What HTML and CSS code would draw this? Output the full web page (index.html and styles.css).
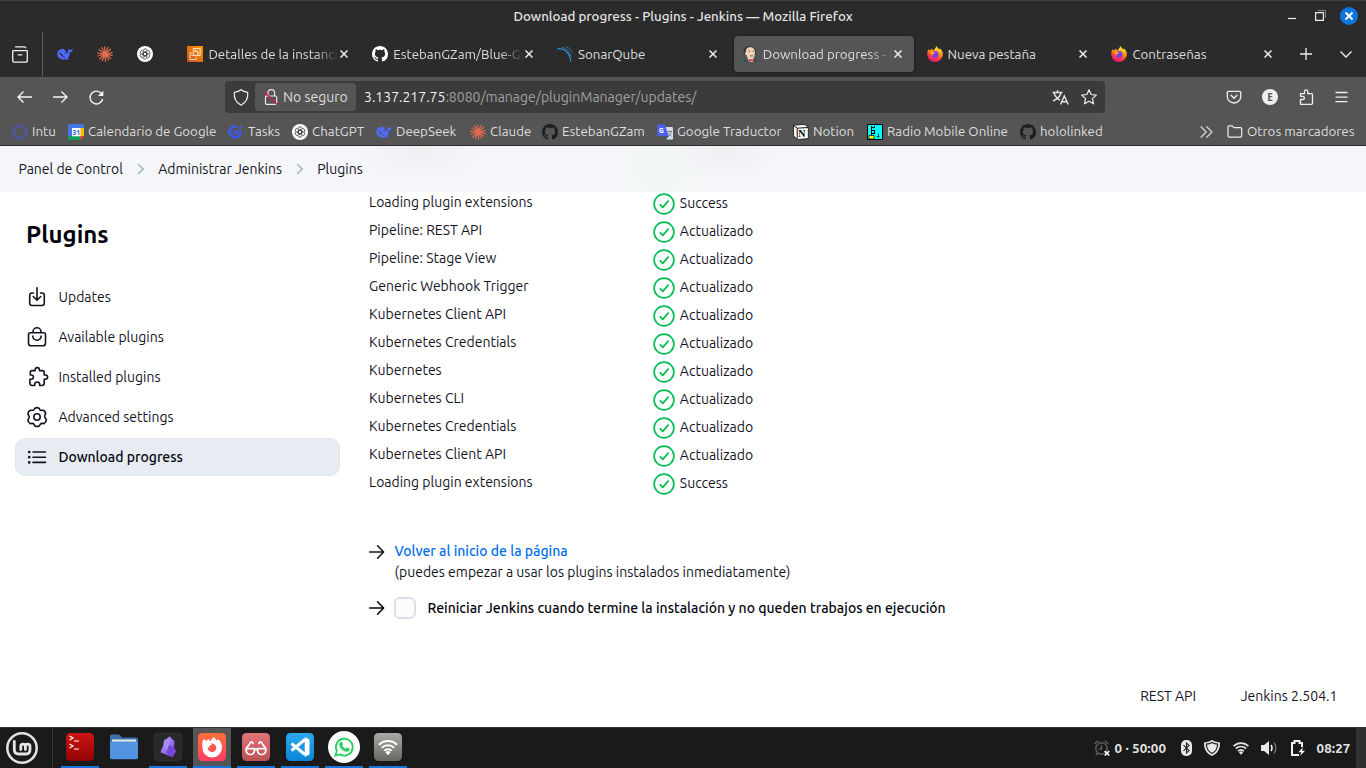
FILE: index.html
```html
<!DOCTYPE html>
<html lang="es">
<head>
<meta charset="utf-8">
<title>Download progress - Plugins - Jenkins</title>
<link rel="stylesheet" href="styles.css">
</head>
<body>
<svg class="defs" aria-hidden="true">
  <defs>
    <linearGradient id="orange" x1="0" y1="1" x2="1" y2="0"><stop offset="0" stop-color="#c8511b"/><stop offset="1" stop-color="#f90"/></linearGradient>
    <linearGradient id="fire" x1=".7" y1="0" x2=".3" y2="1"><stop offset="0" stop-color="#fff44f"/><stop offset=".4" stop-color="#ff980e"/><stop offset=".7" stop-color="#ff3647"/><stop offset="1" stop-color="#e31587"/></linearGradient>
    <linearGradient id="red" x1="0" y1="0" x2="0" y2="1"><stop offset="0" stop-color="#d01313"/><stop offset="1" stop-color="#900404"/></linearGradient>
    <linearGradient id="coral" x1="0" y1="0" x2="0" y2="1"><stop offset="0" stop-color="#ff7139"/><stop offset="1" stop-color="#ff3c65"/></linearGradient>
    <linearGradient id="rose" x1="0" y1="0" x2="0" y2="1"><stop offset="0" stop-color="#e27479"/><stop offset="1" stop-color="#bb5055"/></linearGradient>
    <linearGradient id="sky" x1="0" y1="0" x2="0" y2="1"><stop offset="0" stop-color="#2baaf0"/><stop offset="1" stop-color="#0b84d6"/></linearGradient>
    <linearGradient id="stone" x1="0" y1="0" x2="0" y2="1"><stop offset="0" stop-color="#aaaaa4"/><stop offset="1" stop-color="#666761"/></linearGradient>
    <linearGradient id="gem" x1="0" y1="0" x2="1" y2="1"><stop offset="0" stop-color="#c4a9ff"/><stop offset="1" stop-color="#6a35d0"/></linearGradient>
  </defs>
  <symbol id="whale" viewBox="0 0 16 16"><path fill="#4d6bfe" d="M.3 7.500C.5 4.600 2.800 3 5.200 3.100c.8 0 1.300-.6 2.100-.2-.4 1 1.700 1.800 2.700 4 .8.6 1.200-.2 1.100-1C10.900 5 11 3.700 12 2.500c.2 1.200.8 1.600 1.700 1.400.7-.1 1.400-.6 2-1-.1 2.100-1 3.300-2.800 3.600.1 2.700-.9 4.700-2.300 6 .6.3 1 .5 1.200 1-1.100.3-2.100.1-3-.3C4.300 14.500 0 11.600.3 7.500z"/><path fill="var(--back)" d="M1.800 6.500c1.700 0 3.100 1.500 4.200 3.100.8 1.300 1.700 1.400 2.700 2-1.500.2-2.900-.5-3.900-1.500C3.500 8.900 3 8.200 1.800 6.500zM7.500 6.500c1.200-.2 1.800.7 1.600 1.400L7.800 7.500z"/></symbol>
  <symbol id="burst" viewBox="0 0 16 16"><path stroke="#e06b50" stroke-width="1.250" stroke-linecap="round" d="M8 8 7.700.8M8 8 11 1.500M8 8l5.500-4.800M8 8l7-1.300M8 8l7.200 1.300M8 8l5.800 4.300M8 8l3.500 6M8 8l.5 7.300M8 8l-2.800 6.700M8 8l-5.300 5M8 8 .8 10M8 8 .8 7.200M8 8 2 3.800M8 8 4.700 1.500"/></symbol>
  <symbol id="gpt" viewBox="0 0 16 16">
    <circle cx="8" cy="8" r="8" fill="#fff"/>
    <g fill="none" stroke="#222" stroke-width=".75">
      <path d="M8 5.900 9.800 7v2L8 10.100 6.200 9V7z"/>
      <path d="M6.200 9V4.800Q6.500 3 8.200 2.900q1.300 0 2 1"/>
      <path d="M6.200 9V4.800Q6.500 3 8.200 2.900q1.300 0 2 1" transform="rotate(60 8 8)"/>
      <path d="M6.200 9V4.800Q6.500 3 8.200 2.900q1.300 0 2 1" transform="rotate(120 8 8)"/>
      <path d="M6.200 9V4.800Q6.500 3 8.200 2.900q1.300 0 2 1" transform="rotate(180 8 8)"/>
      <path d="M6.200 9V4.800Q6.500 3 8.200 2.900q1.300 0 2 1" transform="rotate(240 8 8)"/>
      <path d="M6.200 9V4.800Q6.500 3 8.200 2.900q1.300 0 2 1" transform="rotate(300 8 8)"/>
    </g>
  </symbol>
  <symbol id="github" viewBox="0 0 16 16"><path fill="currentColor" d="M8 0C3.580 0 0 3.580 0 8c0 3.540 2.290 6.530 5.470 7.590.4.070.55-.17.55-.38 0-.19-.01-.82-.01-1.490-2.010.37-2.530-.49-2.690-.94-.09-.23-.48-.94-.82-1.130-.28-.15-.68-.52-.01-.53.63-.01 1.080.58 1.230.82.72 1.210 1.870.87 2.330.66.07-.52.28-.87.51-1.070-1.780-.2-3.640-.89-3.640-3.950 0-.87.31-1.590.82-2.150-.08-.2-.36-1.020.08-2.120 0 0 .67-.21 2.200.82.64-.18 1.320-.27 2-.27s1.360.09 2 .27c1.530-1.040 2.200-.82 2.200-.82.44 1.100.16 1.920.08 2.120.51.56.82 1.270.82 2.150 0 3.070-1.870 3.750-3.650 3.950.29.25.54.73.54 1.480 0 1.070-.01 1.930-.01 2.200 0 .21.15.46.55.38A8.010 8.010 0 0 0 16 8c0-4.420-3.580-8-8-8z"/></symbol>
  <symbol id="firefox" viewBox="0 0 16 16"><path fill="url(#fire)" d="M1.400 3.300 3 4.600c.5-1 1.300-1.700 2-2 0 .9.500 1.500 1.200 1.900C7.500 3.900 8 2.200 10 0c.2 1.800 1.200 2.500 2.300 3.200l.4-.8c2 1.300 3.200 3.200 3.100 5.900A7.800 7.800 0 0 1 8 16 7.800 7.800 0 0 1 .2 8.100c0-1.800.3-3.300 1.200-4.800z"/><circle cx="8" cy="8.400" r="3.400" fill="#7542e5"/><path fill="#ff9f1c" d="M3.200 6c1.600-.8 3.200-.4 4.600.4.400.9-.7 1.200-1.500 1.500-.6.300-.2 1.300-.1 1.700-1.800-.1-3-1.800-3-3.600z"/></symbol>
  <symbol id="check" viewBox="0 0 22 22"><g fill="none" stroke="#05bd55" stroke-width="1.700" stroke-linecap="round" stroke-linejoin="round"><circle cx="11" cy="11" r="9.900"/><path d="m7.300 11.800 2.500 2.600 5.300-6.300"/></g></symbol>
  <symbol id="arrow" viewBox="0 0 16 16"><path fill="none" stroke="currentColor" stroke-width="1.600" stroke-linecap="round" stroke-linejoin="round" d="M.8 8h13.600M8.600 1.800 14.600 8l-6 6.200"/></symbol>
  <symbol id="close" viewBox="0 0 8 8"><path stroke="currentColor" stroke-width="1.500" d="m.5.5 7 7m0-7-7 7"/></symbol>
  <symbol id="wifi" viewBox="0 0 16 14"><g fill="none" stroke="currentColor" stroke-width="1.700"><path d="M.6 5.200a10.400 10.400 0 0 1 14.800 0M2.800 7.700a7.300 7.300 0 0 1 10.400 0M5 10.100a4.200 4.200 0 0 1 6 0"/></g><path fill="currentColor" d="M5.900 11.400a3 3 0 0 1 4.200 0L8 13.800z"/></symbol>
</svg>

<header class="browser">
  <div class="titlebar">
    <span class="window-title">Download progress - Plugins - Jenkins — Mozilla Firefox</span>
    <div class="window-buttons">
      <svg width="8" height="12"><path stroke="#eee" stroke-width="1.200" d="M0 8.500h8"/></svg>
      <svg width="11" height="11" fill="none"><path stroke="#eee" stroke-width="1.200" d="M.6 2.600h7.800v7.800H.6z"/><path stroke="#888" d="M3 .5h7.500V8"/></svg>
      <span class="window-close"><svg width="8" height="8" viewBox="0 0 8 8"><path stroke="#fff" stroke-width="2" d="m.5.5 7 7m0-7-7 7"/></svg></span>
    </div>
  </div>

  <div class="tabstrip">
    <div class="archive"><svg width="16" height="17" fill="none" stroke="#f0f0f0" stroke-width="1.300" stroke-linecap="round"><path d="M3.500.8h9.200q1 0 1 1M1 4.600h14a.8.8 0 0 1 .3.800v8.800q0 2-2 2H2.700q-2 0-2-2V5.400q0-.8.800-.8zM6.200 8.800h3.600"/></svg></div>
    <div class="pinned">
      <svg class="fav"><use href="#whale"/></svg>
      <svg class="fav"><use href="#burst"/></svg>
      <svg class="fav"><use href="#gpt"/></svg>
    </div>
    <div class="tabs">
      <div class="tab"><svg class="fav" viewBox="0 0 16 16" fill="none" stroke="#fff" stroke-width=".9"><path fill="url(#orange)" stroke="none" d="M0 0h16v16H0z"/><rect x="6.300" y="5.200" width="4.500" height="4.500" rx=".5"/><path d="M5.200 7H3v6.500h6.300v-2.200M6.200 5V2.500h7v7h-2.300M8.500 3.300v1.500M12 7.400h1M4.300 9.500h1.500" stroke-width=".75"/></svg><span class="tab-title fade">Detalles de la instancia</span><svg class="x"><use href="#close"/></svg></div>
      <div class="tab"><svg class="fav white"><use href="#github"/></svg><span class="tab-title fade">EstebanGZam/Blue-Green</span><svg class="x"><use href="#close"/></svg></div>
      <div class="tab"><svg class="fav" viewBox="0 0 16 16" fill="none" stroke="#2f8fc7" stroke-linecap="round"><path d="M.5 2.800C8 2 13.200 8 13.700 15.500" stroke-width="1.200"/><path d="M5.500 1.200c4.300 1.300 7.600 5 8.700 9M9.500.7c2.400 1 4.300 2.900 5.500 5" stroke-width=".8"/></svg><span class="tab-title">SonarQube</span><svg class="x"><use href="#close"/></svg></div>
      <div class="tab active"><svg class="fav" viewBox="0 0 16 16"><path fill="#335061" d="M.8 16q0-3.300 3.700-4h7q3.200 1 3.300 4z"/><path fill="#3d3835" d="M1.500 6.500Q1 .3 8 .1q6.300.2 6.200 6.400L13 10.500 4 10.200z"/><path fill="#f0d6b7" d="M4 6C3.800 2.300 5.500 1.200 8.300 1.200S13 2.800 12.900 6.500c0 4-1.300 7-4 7C6 13.500 4.800 11 4.600 9 3 9.200 2.600 6.500 4 6z"/><path stroke="#5d4c3c" stroke-width=".9" fill="none" d="M6.300 5.200h2m2.200 0H12M8 9.900h3"/><path fill="#6e6259" d="m3.500 9 3.500 5-3-.2z"/><path fill="#fff" d="m6 12 3 2.500 2.700-2-.4 3.500H7z"/><path fill="#d33833" d="m7 13 2.500 1L12 13v3l-2.500-.8L7 16z"/></svg><span class="tab-title fade">Download progress - Plugins</span><svg class="x"><use href="#close"/></svg></div>
      <div class="tab"><svg class="fav"><use href="#firefox"/></svg><span class="tab-title">Nueva pestaña</span><svg class="x"><use href="#close"/></svg></div>
      <div class="tab"><svg class="fav"><use href="#firefox"/></svg><span class="tab-title">Contraseñas</span><svg class="x"><use href="#close"/></svg></div>
    </div>
    <svg class="newtab" width="12" height="12"><path stroke="#f0f0f0" stroke-width="1.300" d="M6 0v12M0 6h12"/></svg>
    <svg class="alltabs" width="12" height="7"><path fill="none" stroke="#f0f0f0" stroke-width="1.300" d="m.5.5 5.500 5.500L11.500.5"/></svg>
  </div>

  <div class="navbar">
    <div class="history">
      <svg width="15" height="12" fill="none" stroke="#f5f5f5" stroke-width="1.400"><path d="M15 6H1.300M6.500.5 1 6l5.500 5.500"/></svg>
      <svg width="15" height="12" fill="none" stroke="#f5f5f5" stroke-width="1.400"><path d="M0 6h13.700M8.500.5 14 6l-5.500 5.500"/></svg>
      <svg width="15" height="15" fill="none" stroke="#f5f5f5" stroke-width="1.400"><path d="M12.800 4A6.400 6.400 0 1 0 13.700 9"/><path fill="#f5f5f5" stroke="none" d="M14.300.7v5.400H8.900z"/></svg>
    </div>
    <div class="urlbar">
      <svg class="shield" width="16" height="17" fill="none" stroke="#eee" stroke-width="1.200"><path d="M8 .8Q10.500 3 14.700 3.300C15.200 9 12.500 14 8 16.200 3.500 14 .8 9 1.300 3.300 5.500 3 8 .8 8 .8z"/></svg>
      <span class="identity"><svg width="14" height="16" fill="none"><path stroke="#e8e8e8" stroke-width="1.200" d="M4 7V4a3.300 3.300 0 0 1 6.600 0v3M2.800 7h8.700q1.200 0 1.200 1.200V14q0 1.300-1.300 1.300H2.800q-1.300 0-1.300-1.300V8.200Q1.500 7 2.800 7z"/><path stroke="#e0174b" stroke-width="1.300" d="m.2 2.500 13 13"/></svg><span class="identity-label">No seguro</span></span>
      <span class="url"><span class="host">3.137.217.75</span>:8080/manage/pluginManager/updates/</span>
      <svg class="translate" width="17" height="15" fill="none" stroke="#e5e5e5" stroke-width="1.400"><path d="M.5 2.500h10M5.500.2v2.200M2 3c1.200 3.600 3.300 5.800 6 7.200M9 3C8 6.500 5 9.300 1 11M8.500 14.500 12.300 6l3.900 8.500M9.500 11.800h5.500"/></svg>
      <svg class="star" width="16" height="16" viewBox="0 0 16 16" fill="none" stroke="#eee" stroke-width="1.200" stroke-linejoin="round"><path d="m8 .8 2.100 4.700 5.200.6-3.900 3.500 1.100 5.200L8 12.200l-4.500 2.600 1.100-5.200L.7 6.100l5.200-.6z"/></svg>
    </div>
    <div class="tools">
      <svg width="16" height="16" viewBox="0 0 16 16" fill="none" stroke="#eee" stroke-width="1.300" stroke-linecap="round" stroke-linejoin="round"><path d="M2.500 2.300h11q1.200 0 1.200 1.200v4A6.700 6.200 0 0 1 8 14 6.700 6.200 0 0 1 1.300 7.500v-4q0-1.200 1.200-1.200z"/><path d="m5 6.200 3 3 3-3"/></svg>
      <span class="account">E</span>
      <svg width="15" height="16" fill="none" stroke="#eee" stroke-width="1.300" stroke-linejoin="round"><path d="M1.500 15.300V10.500h2.300c2.100 0 2.100-3.200 0-3.200H1.500V4.700h4V2.500c0-2.300 3.300-2.300 3.300 0v2.200h3.700q1 0 1 1v8.600q0 1-1 1z"/></svg>
      <svg width="13" height="12"><path stroke="#eee" stroke-width="1.300" d="M.5 1.500h12m-12 4.600h12m-12 4.500h12"/></svg>
    </div>
  </div>

  <div class="bookmarks">
    <span class="bm"><svg class="fav" viewBox="0 0 16 16" fill="none" stroke="#5558d8"><circle cx="8" cy="8" r="6.300" stroke-width="3" stroke-dasharray=".8 .85"/></svg>Intu</span>
    <span class="bm"><svg class="fav" viewBox="0 0 16 16"><path fill="#4374e8" d="M1 0h14l1 1v11H0V1z"/><path fill="#fbbc04" d="M12 4h4v8h-4z"/><path fill="#0f9d58" d="M0 12h12v4H1l-1-1z"/><path fill="#ea4335" d="M12 12h4l-4 4z"/><path fill="#fff" d="M4 4h8.500v8.300H4z"/><text x="4.200" y="11" class="cal">31</text></svg>Calendario de Google</span>
    <span class="bm"><svg class="fav" viewBox="0 0 16 16" fill="none"><path stroke="#3c59f5" stroke-width="2.600" d="M8 2.400A5.500 5.500 0 1 0 12.500 7"/><path stroke="#3c59f5" stroke-width="1.900" d="m4.700 7 2.500 2.300 3.600-3.800"/><circle cx="12.300" cy="3.200" r="1.500" fill="#3c59f5"/></svg>Tasks</span>
    <span class="bm"><svg class="fav"><use href="#gpt"/></svg>ChatGPT</span>
    <span class="bm"><svg class="fav"><use href="#whale"/></svg>DeepSeek</span>
    <span class="bm"><svg class="fav"><use href="#burst"/></svg>Claude</span>
    <span class="bm"><svg class="fav black"><use href="#github"/></svg>EstebanGZam</span>
    <span class="bm"><svg class="fav" viewBox="0 0 16 16"><path fill="#d8dde3" d="M7 3h8q1 0 1 1v10.500q0 1-1 1H9.500z"/><path fill="#4c62ee" d="M1.200.5h6.600l4 11.500H1.200q-1 0-1-1V1.500q0-1 1-1z"/><path fill="#3548b8" d="M8.500 12h3.300l-2.300 3z"/><path fill="none" stroke="#667b86" stroke-width=".9" d="M10.500 7.500h4.600m-2.300-1v1m1.700 0q-.7 3-3.500 4.800m.3-3q1.500 2 3.300 3"/><text x="1.800" y="9" class="gt">G</text></svg>Google Traductor</span>
    <span class="bm"><svg class="fav" viewBox="0 0 16 16"><path fill="#fff" stroke="#111" stroke-width=".8" d="m.6 1.200 11-.8 3.700 2.500v11.700l-11 .9-3.700-3.800z"/><path fill="none" stroke="#111" d="m1 1.800 3.200 2.400V15M4.200 4.200 15.300 3.500"/><text x="5.300" y="13.200" class="notion">N</text></svg>Notion</span>
    <span class="bm"><svg class="fav" viewBox="0 0 16 16"><path fill="#0ff" stroke="#000" d="M.5.500h15v15H.5z"/><path fill="none" stroke="#000" d="M4.500 2v9.500M7.500 2v2M7.500 6v4M4.500 3.500h3M4.500 6.500h3M4.500 9.500h3"/><path fill="none" stroke="#063" d="M11.500 9.500V14M9.500 12.500h3"/><path fill="#ff0" stroke="#000" stroke-width=".7" d="M2 11.500h5v3.500H2z"/></svg>Radio Mobile Online</span>
    <span class="bm"><svg class="fav black"><use href="#github"/></svg>hololinked</span>
    <svg class="more" width="13" height="12" fill="none" stroke="#ddd" stroke-width="1.200"><path d="M.7.500 6.200 6 .7 11.500m5.800-11L12 6l-5.500 5.500"/></svg>
    <span class="bm others"><svg width="16" height="13" fill="none" stroke="#eee" stroke-width="1.200"><path d="M1 2Q1 .8 2.200.8h3L7 2.600h6.500q1.200 0 1.200 1.200v7q0 1.300-1.200 1.300H2.200Q1 12.100 1 10.800z"/></svg>Otros marcadores</span>
  </div>
</header>

<main class="page">
  <nav class="breadcrumbs">
    <span>Panel de Control</span>
    <svg class="chev" width="8" height="12"><path d="m1.200 1.200 5 4.800-5 4.800"/></svg>
    <span>Administrar Jenkins</span>
    <svg class="chev" width="8" height="12"><path d="m1.200 1.200 5 4.800-5 4.800"/></svg>
    <span>Plugins</span>
  </nav>
  <div class="columns">
    <aside class="side">
      <h1>Plugins</h1>
      <a class="task"><svg width="22" height="22" viewBox="0 0 22 22"><path d="M7.500 7H6Q3.700 7 3.700 9.300v8q0 2.200 2.300 2.200h10q2.300 0 2.300-2.200v-8Q18.300 7 16 7h-1.500M11 1.800v12M7.300 10.500l3.700 3.700 3.700-3.700"/></svg>Updates</a>
      <a class="task"><svg width="22" height="22" viewBox="0 0 22 22"><path d="M4.500 6.800h13q2 0 2 2v8.400q0 2.600-2.600 2.600H5.100q-2.600 0-2.600-2.600V8.800q0-2 2-2zM7 6.500V5.800a4 4 0 0 1 8 0v.7M6.800 10a4.200 4.200 0 0 0 8.400 0"/></svg>Available plugins</a>
      <a class="task"><svg width="22" height="22" viewBox="0 0 22 22"><path d="M19.500 9h-1.300V6.400q0-1.800-1.800-1.800h-3V3.700a2 2 0 0 0-4.200 0v.9H6Q4.300 4.600 4.300 6.400V9h1a2.100 2.100 0 0 1 0 4.200h-1.400V17q0 2.500 2.500 2.500h2.300v-1a2.500 2.500 0 0 1 5 0v1h2q2.500 0 2.500-2.500v-3.800h1.300a2.100 2.100 0 0 0 0-4.200z"/></svg>Installed plugins</a>
      <a class="task"><svg width="22" height="22" viewBox="0 0 22 22"><circle cx="11" cy="11" r="3.200"/><path d="M8.800 2.400Q11 .8 13.200 2.400l.7 1.500q.7.700 1.800.4l1.600-.1q2.400 1.100 2.300 3.700l-.9 1.500q-.4 1.600.9 3.200l.8 1.200q-.1 2.600-2.300 3.800l-1.700-.2q-1.300-.1-2 .8l-.9 1.500q-2.400 1.500-4.800 0L8 18.200q-.8-1-2.100-.8l-1.700.2q-2.300-1.300-2.300-3.800l.9-1.500q.8-1.300 0-2.700l-.9-1.600Q1.900 5.400 4.300 4.200L6 4.300q1.300.1 2-.6z"/></svg>Advanced settings</a>
      <a class="task current"><svg width="22" height="22" viewBox="0 0 22 22"><path d="M7 6h12.500M7 11.200h12.500M7 16.400h12.500"/><path class="dots" d="M3.200 6h.01M3.200 11.200h.01M3.200 16.400h.01"/></svg>Download progress</a>
    </aside>
    <section class="content">
      <div class="row"><span>Loading plugin extensions</span><svg><use href="#check"/></svg><span class="status">Success</span></div>
      <div class="row"><span>Pipeline: REST API</span><svg><use href="#check"/></svg><span class="status">Actualizado</span></div>
      <div class="row"><span>Pipeline: Stage View</span><svg><use href="#check"/></svg><span class="status">Actualizado</span></div>
      <div class="row"><span>Generic Webhook Trigger</span><svg><use href="#check"/></svg><span class="status">Actualizado</span></div>
      <div class="row"><span>Kubernetes Client API</span><svg><use href="#check"/></svg><span class="status">Actualizado</span></div>
      <div class="row"><span>Kubernetes Credentials</span><svg><use href="#check"/></svg><span class="status">Actualizado</span></div>
      <div class="row"><span>Kubernetes</span><svg><use href="#check"/></svg><span class="status">Actualizado</span></div>
      <div class="row"><span>Kubernetes CLI</span><svg><use href="#check"/></svg><span class="status">Actualizado</span></div>
      <div class="row"><span>Kubernetes Credentials</span><svg><use href="#check"/></svg><span class="status">Actualizado</span></div>
      <div class="row"><span>Kubernetes Client API</span><svg><use href="#check"/></svg><span class="status">Actualizado</span></div>
      <div class="row"><span>Loading plugin extensions</span><svg><use href="#check"/></svg><span class="status">Success</span></div>
      <div class="next">
        <svg class="go"><use href="#arrow"/></svg>
        <div><a class="link">Volver al inicio de la página</a><p>(puedes empezar a usar los plugins instalados inmediatamente)</p></div>
      </div>
      <div class="restart">
        <svg class="go"><use href="#arrow"/></svg>
        <span class="checkbox"></span>
        <label>Reiniciar Jenkins cuando termine la instalación y no queden trabajos en ejecución</label>
      </div>
    </section>
  </div>
  <footer class="footer"><span>REST API</span><span>Jenkins 2.504.1</span></footer>
</main>

<div class="panel">
  <div class="menu"><svg width="32" height="32" viewBox="0 0 32 32" fill="none" stroke="#e4e4e4"><circle cx="16" cy="16" r="14.700" stroke-width="2.500"/><path stroke-width="2.800" stroke-linecap="round" stroke-linejoin="round" d="M8.300 9.300v8.200q0 4.500 4.500 4.500h6.900q4.300 0 4.300-4.200v-3.300q0-2.300-2.300-2.300T19.400 14.500V17.500m0-3q0-2.300-2.300-2.300t-2.300 2.300v3"/></svg></div>
  <div class="apps">
    <span class="app open"><svg viewBox="0 0 30 30"><rect x="1" y="1" width="28" height="28" rx="4.500" fill="url(#red)"/><path fill="none" stroke="#fff" stroke-width="1.200" d="m4.500 4 3.500 2-3.500 2M9 9h5M4.500 12 8 14l-3.500 2M9 17h5"/></svg></span>
    <span class="app"><svg viewBox="0 0 30 30"><path fill="#3e6fad" d="M1 4q0-1.500 1.500-1.500H10l3 3h14q2 0 2 2V12H1z"/><path fill="#e8e8e8" d="M3 7.500h24v4H3z"/><path fill="#5294e2" d="M1 9.500h28v16q0 1.700-1.700 1.700H2.700Q1 27.200 1 25.500z"/></svg></span>
    <span class="app open"><svg viewBox="0 0 30 30"><rect x="1" y="1" width="28" height="28" rx="4.500" fill="#292929" stroke="#3a3a3a" stroke-width=".5"/><path fill="url(#gem)" d="m17 4.500 4.500 5-.5 6 2.200 4-3.700 5.700-7.500-3-4.500-2 2.700-6.700.8-5z"/><path fill="#a88bfa" d="m11 9 6-4.500-1 8-2.800 7.700z"/><path fill="#7445db" d="m13.200 20.200 3-7 4.800 2.300-1.500 9.700z"/></svg></span>
    <span class="app open focus"><svg viewBox="0 0 30 30"><rect x="1" y="1" width="28" height="28" rx="4.500" fill="url(#coral)"/><path fill="#fff" fill-rule="evenodd" d="M5.500 9.500 7 7l2.500 2q1-1.500 2.500-2l1 2.500q1.500-3 4-4.500 1 2.500 3.500 3.500l.5-1.500q4 3 4 8.500a9.800 9.800 0 0 1-19.600.3Q5 12 5.500 9.500zM15 11.500a4.300 4.300 0 1 0 4.300 4.300A4.300 4.300 0 0 0 15 11.500z"/><path fill="#fff" d="M9 11.500q3.500-1 6 .8l-3 2.200 1 3z"/></svg></span>
    <span class="app open"><svg viewBox="0 0 30 30"><rect x="1" y="1" width="28" height="28" rx="4.500" fill="url(#rose)"/><g fill="none" stroke="#fff" stroke-width="1.700" stroke-linejoin="round" stroke-linecap="round"><path d="M5.200 16.700h8.300v1.800a4 4 0 0 1-4.100 4 4.100 4.100 0 0 1-4.200-4.200zM16.500 16.700h8.300v1.600a4.100 4.100 0 0 1-4.200 4.200 4 4 0 0 1-4.100-4zM13.500 17.400h3M5.200 16.500l4.500-6.300q1.600-1.200 2.300 1.300M24.800 16.500l-4.500-6.300q-1.600-1.200-2.300 1.300"/></g></svg></span>
    <span class="app open"><svg viewBox="0 0 30 30"><rect x="1" y="1" width="28" height="28" rx="4.500" fill="url(#sky)"/><path fill="none" stroke="#fff" stroke-width="3" stroke-linejoin="round" d="M20 7.500 6.500 18.500M6.500 11.500 20 22.500"/><path fill="#fff" d="m19.700 5 4.800 2.500v15l-4.800 2.500z"/></svg></span>
    <span class="app open round"><svg viewBox="0 0 32 32"><circle cx="16" cy="16" r="16" fill="#fff"/><path fill="none" stroke="#2bd065" stroke-width="1.900" d="m7.400 24.700 1.400-4.800a8.400 8.400 0 1 1 3.300 3.500z"/><path fill="#2bd065" d="M12.500 11q1.200-.8 1.800.4l.8 1.900q-.2.700-.9 1.300 1.200 2.300 3.500 3.200l1.300-1.400 2.700 1.300q.3 3-3 3.100-5-.4-7.300-6-.5-2.500 1.100-3.800z"/></svg></span>
    <span class="app open"><svg viewBox="0 0 30 30"><rect x="1" y="1" width="28" height="28" rx="4.500" fill="url(#stone)"/><svg class="glyph" x="5" y="6.500" width="20" height="17" color="#fff"><use href="#wifi"/></svg></svg></span>
  </div>
  <div class="tray">
    <svg width="17" height="17" fill="none"><g stroke="#5c5c5c" stroke-width="1.500"><circle cx="7.500" cy="8.500" r="5.700"/><path d="M1 4Q2 1.500 4.500 1M14 4q-1-2.500-3.500-3M7.500 5v4H4.800M3.500 13l-1.700 2.500"/></g><path stroke="#fff" stroke-width="1.700" d="m10.700 11 4.500 4.500m0-4.500-4.500 4.500"/></svg>
    <b class="timer">0 · 50:00</b>
    <svg class="bluetooth" width="11" height="16"><rect width="11" height="16" rx="5" fill="#e8e8e8"/><path fill="none" stroke="#222" stroke-width="1.100" d="m2.500 5.200 5.600 5.400L5.500 13V3l2.600 2.400-5.600 5.400"/></svg>
    <svg class="guard" width="16" height="16" fill="none"><path fill="#e8e8e8" d="M8 0q3.500 2.300 8 2.400C16.200 9 13.500 13.500 8 16 2.500 13.500-.2 9 0 2.400 4.500 2.300 8 0 8 0z"/><path stroke="#222" stroke-width="1.200" d="M8 2.500q2.500 1.500 5.700 1.700-.4 6.600-5.700 9.300Q2.700 10.800 2.300 4.200 5.500 4 8 2.500z"/></svg>
    <svg class="tray-wifi" width="16" height="14"><use href="#wifi"/></svg>
    <svg class="volume" width="17" height="14" fill="none"><path fill="#e8e8e8" d="M0 4h3l5-4v14l-5-4H0z"/><path stroke="#e8e8e8" stroke-width="1.700" d="M10 4q1.900 3 0 6"/><path stroke="#777" stroke-width="1.300" d="M13 1.500q3.700 5.500 0 11"/></svg>
    <svg class="battery" width="15" height="16" fill="none"><path stroke="#f0f0f0" stroke-width="2" d="M8 15H1V3h2.500V1h5v2H11v4"/><path fill="#fff" d="m12 7-4.500 5.300h3L9 16l5-5.200h-3z"/></svg>
    <b class="clock">08:27</b>
    <i class="desktop"></i>
  </div>
</div>
</body>
</html>
```
FILE: styles.css
```css
* { box-sizing: border-box; }
body { margin: 0; width: 1366px; height: 768px; overflow: hidden; display: flex; flex-direction: column; font: 14px/20px Ubuntu, "Noto Sans", sans-serif; color: #14141f; white-space: nowrap; }
svg { display: block; flex: none; overflow: visible; }
.defs { position: absolute; width: 0; height: 0; overflow: hidden; }
.fav { width: 16px; height: 16px; }
.white { color: #fff; }
.black { color: #1b1f23; }

.browser { height: 146px; flex: none; background: #555; color: #ddd; font-size: 13.333px; border-bottom: 1px solid #2d2a32; }
.titlebar { height: 32px; background: #2b2b2b; border-top: 1px solid #3d3d3d; display: grid; grid-template-columns: 1fr auto 1fr; align-items: center; color: #e4e4e4; padding-bottom: 2px; }
.window-title { grid-column: 2; font-weight: 500; padding-top: 2px; }
.window-buttons { display: flex; align-items: center; justify-content: flex-end; gap: 19px; padding-right: 8px; }
.window-close { width: 18px; height: 18px; border-radius: 50%; background: #0c75de; display: grid; place-items: center; margin-left: -5px; }

.tabstrip { --back: #2b2b2b; height: 45px; background: #2b2b2b; display: flex; align-items: center; padding-bottom: 1px; }
.archive { width: 43px; height: 44px; padding-left: 12px; display: flex; align-items: center; border-right: 1px solid #5b5b5b; }
.pinned { display: flex; gap: 24px; padding-left: 14px; width: 136.4px; }
.tabs { display: grid; grid-template-columns: repeat(6, 180px); gap: 4.8px; }
.tab { height: 36px; display: flex; align-items: center; gap: 5px; padding: 0 11.6px 0 8px; border-radius: 4px; }
.tab.active { background: #555; box-shadow: 0 0 3px #111; }
.tab-title { flex: 1; overflow: hidden; padding-top: 2px; margin-right: -4px; }
.fade { -webkit-mask-image: linear-gradient(90deg, #000 calc(100% - 24px), transparent); mask-image: linear-gradient(90deg, #000 calc(100% - 24px), transparent); }
.x { width: 8px; height: 8px; color: #eee; }
.newtab { margin-left: 17px; }
.alltabs { margin-left: 28px; }

.navbar { height: 40px; display: flex; align-items: center; }
.history { width: 225px; padding-left: 16.5px; display: flex; align-items: center; gap: 21px; }
.urlbar { width: 880px; height: 32px; display: flex; align-items: center; padding: 0 8px; border-radius: 4px; background: #3b3b3b; font-size: 14px; }
.identity { display: flex; align-items: center; gap: 5px; width: 101px; height: 28px; margin-left: 6px; padding-left: 9px; border-radius: 4px; background: #555; }
.url { flex: 1; padding-left: 8px; color: #a0a0a0; }
.host { color: #eee; }
.star { margin-left: 12px; }
.tools { flex: 1; display: flex; align-items: center; justify-content: space-between; padding: 0 18px 0 121px; }
.account { width: 16px; height: 16px; margin-left: -1px; border-radius: 50%; background: #eee; color: #555; font: bold 10px/16px "Noto Sans", sans-serif; text-align: center; }

.bookmarks { --back: #555; height: 28px; display: grid; align-items: center; padding: 1px 0 0 12px; grid-template-columns: 56px 160px 64px 84px 94px 72px 115px 136px 74px 153px 180px 27px auto; }
.bm { display: flex; align-items: center; gap: 4px; }
.cal { font: bold 7px "Noto Sans", sans-serif; fill: #3367d6; }
.gt { font: bold 7px "Noto Sans", sans-serif; fill: #fff; }
.notion { font: bold 10px "Liberation Serif", serif; fill: #000; }

.page { flex: 1; display: flex; flex-direction: column; background: #fff; }
.breadcrumbs { height: 46px; display: flex; align-items: center; padding-left: 18.4px; background: radial-gradient(70px 34px at 420px 0, #efeff2, transparent), radial-gradient(60px 34px at 722px 0, #efeff2, transparent), radial-gradient(60px 60px at 660px 20px, #f2f6f6, transparent), #f5f6f9; }
.chev { fill: none; stroke: #9eb2cb; stroke-width: 1.5; margin: 0 13.2px 0 14px; }
.columns { display: flex; height: 480px; }
.side { width: 369px; padding: 23px 0 0 15px; }
h1 { margin: 0 0 23px 11px; font-size: 24px; line-height: 40px; font-weight: 600; color: #05050f; }
.task { width: 325px; height: 38px; margin-bottom: 2px; padding-left: 11px; display: flex; align-items: center; gap: 10.4px; border-radius: 10px; }
.task svg { fill: none; stroke: #14141f; stroke-width: 1.6; stroke-linecap: round; stroke-linejoin: round; }
.task .dots { stroke-width: 2.7; }
.current { background: #e7ecf3; border: 1px solid #e0e6ee; font-weight: 500; padding-left: 10px; color: #05050f; }
.content { flex: 1; margin-top: -3px; }
.row { height: 28px; display: grid; grid-template-columns: 284px 26.8px auto; align-items: start; padding-top: 3px; }
.row svg { width: 22px; height: 22px; margin-top: 1px; }
.status { padding-top: 1px; }
.next { display: flex; gap: 9.6px; margin-top: 44px; line-height: 21px; }
.go { width: 16px; height: 16px; }
.next .go { margin-top: 3px; }
.next p { margin: 0; }
.link { color: #006fee; font-weight: 500; }
.restart { display: flex; align-items: center; margin-top: 14px; font-weight: 500; color: #05050f; }
.checkbox { width: 22px; height: 22px; margin: 0 11.4px 0 9px; border: 2px solid #d9e0e9; border-radius: 6px; background: #fcfcfd; }
.footer { display: flex; justify-content: flex-end; gap: 44.6px; padding: 14px 28.6px 0 0; }

.panel { height: 41px; flex: none; display: flex; align-items: stretch; background: #1a1a1a; border-top: 1px solid #333; color: #e4e4e4; }
.menu { width: 53px; margin-right: 7px; padding: 4px 0 0 6px; border-right: 1px solid #353535; }
.apps { display: flex; gap: 6px; padding-left: 1px; }
.app { width: 38px; height: 40px; padding: 4px 0 0 4px; }
.app svg { width: 30px; height: 30px; }
.app .glyph { width: 20px; height: 17px; }
.open { border-bottom: 2px solid #1676dd; }
.focus { background: #555; }
.app.round { padding: 3px 0 0 3px; }
.round svg { width: 32px; height: 32px; }
.tray { margin-left: auto; display: flex; align-items: center; font-size: 13.333px; }
.tray b { padding-top: 1px; letter-spacing: .12px; }
.timer { margin: 0 15px 0 4px; }
.guard { margin-left: 12px; }
.tray-wifi { margin-left: 13px; }
.volume { margin-left: 12px; }
.battery { margin-left: 13px; }
.clock { margin: 0 5.500px 0 10.500px; }
.desktop { width: 10px; height: 40px; background: #303030; }
```
